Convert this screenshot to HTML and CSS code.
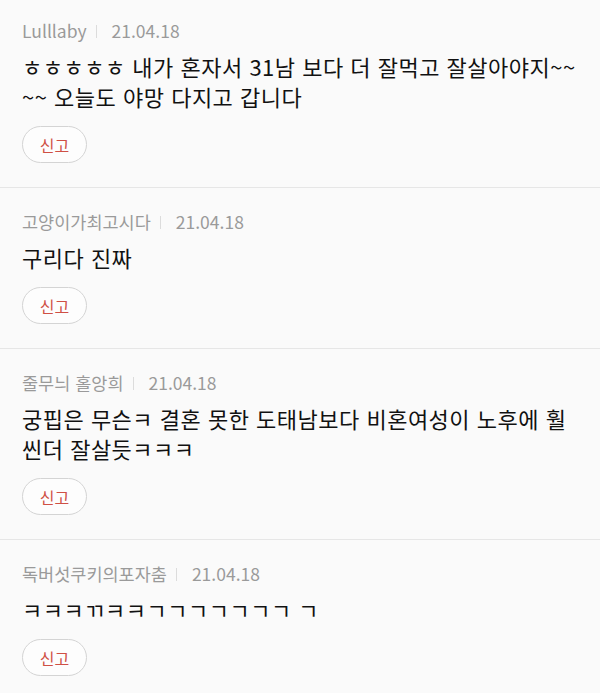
FILE: index.html
```html
<!DOCTYPE html>
<html lang="ko">
<head>
<meta charset="utf-8">
<link rel="stylesheet" href="styles.css">
</head>
<body>
<ul class="comments">
  <li class="comment">
    <div class="meta"><span class="name">Lulllaby</span><span class="sep"></span><span class="date">21.04.18</span></div>
    <p class="text">ㅎㅎㅎㅎㅎ 내가 혼자서 31남 보다 더 잘먹고 잘살아야지~~<br>~~ 오늘도 야망 다지고 갑니다</p>
    <button class="report">신고</button>
  </li>
  <li class="comment">
    <div class="meta"><span class="name">고양이가최고시다</span><span class="sep"></span><span class="date">21.04.18</span></div>
    <p class="text">구리다 진짜</p>
    <button class="report">신고</button>
  </li>
  <li class="comment">
    <div class="meta"><span class="name">줄무늬 홀앙희</span><span class="sep"></span><span class="date">21.04.18</span></div>
    <p class="text">궁핍은 무슨ㅋ 결혼 못한 도태남보다 비혼여성이 노후에 훨<br>씬더 잘살듯ㅋㅋㅋ</p>
    <button class="report">신고</button>
  </li>
  <li class="comment">
    <div class="meta"><span class="name">독버섯쿠키의포자춤</span><span class="sep"></span><span class="date">21.04.18</span></div>
    <p class="text">ㅋㅋㅋㄲㅋㅋㄱㄱㄱㄱㄱㄱㄱ ㄱ</p>
    <button class="report">신고</button>
  </li>
</ul>
</body>
</html>
```
FILE: styles.css
```css
html, body {
  margin: 0;
  padding: 0;
  background: #fafafa;
}
body {
  font-family: "Noto Sans CJK KR", "Noto Sans", sans-serif;
  overflow: hidden;
}
.comments {
  list-style: none;
  margin: -3px 0 0 0;
  padding: 0;
}
.comment {
  padding: 24px 22px 24px 22px;
  border-bottom: 1px solid #e6e6e6;
}
.meta {
  display: flex;
  align-items: center;
  height: 20px;
  font-size: 17.5px;
  color: #9a9a9a;
  line-height: 20px;
}
.sep {
  width: 1px;
  height: 13px;
  background: #dcdcdc;
  margin: 0 15px 0 9px;
}
.text {
  margin: 10px 0 0 0;
  font-size: 22px;
  letter-spacing: 0.5px;
  line-height: 30px;
  color: #111;
  white-space: nowrap;
}
.report {
  display: block;
  margin-top: 15px;
  width: 65px;
  height: 37px;
  border: 1px solid #d4d4d4;
  border-radius: 19px;
  background: #fdfdfd;
  color: #cf5045;
  font-family: "Noto Sans CJK KR", sans-serif;
  font-size: 16px;
  padding: 0;
}
```
